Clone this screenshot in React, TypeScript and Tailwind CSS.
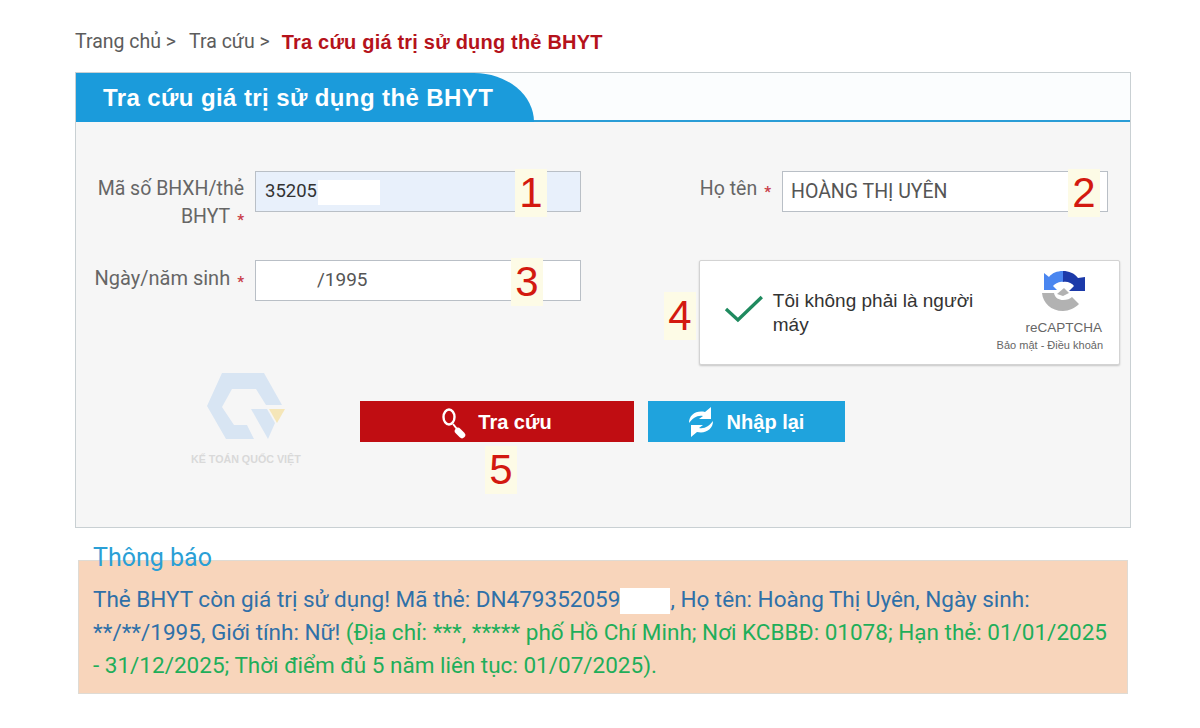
import type { ReactNode } from "react";

function StepNumber({ children, className }: { children: ReactNode; className: string }) {
	return (
		<span
			className={`absolute flex h-[48px] w-[32px] items-center justify-center bg-[#fdfbe6] font-['Liberation_Sans',sans-serif] text-[42px] font-normal leading-none text-[#d3190f] ${className}`}
		>
			{children}
		</span>
	);
}

function Required() {
	return <span className="ml-[7px] align-[-2px] text-[15px] font-bold text-[#c9404a]">*</span>;
}

function RecaptchaLogo() {
	return (
		<svg viewBox="0 0 44 40" className="h-[40px] w-[44px]">
			<path d="M21 0C15 0 10 2 7 6L2 2V19H15L11 15C13 13 17 10 21 11Z" fill="#4a86f0" />
			<path d="M21 0C27 0 32 2 36 7L43 6V20H27L32 15C30 12 25 10 21 11Z" fill="#1c3aa9" />
			<path d="M0 22H12C13 27 17 29 21 29C25 29 28 28 30 26L37 33C33 37 27 40 21 40C9 40 1 32 0 22Z" fill="#b2b2b2" />
			<path d="M15 23L22 17L27 22L21 25Z" fill="#b2b2b2" />
		</svg>
	);
}

function SearchIcon() {
	return (
		<svg viewBox="0 0 26 34" className="h-[34px] w-[26px]">
			<ellipse cx="7" cy="12" rx="5.5" ry="7.5" fill="none" stroke="#fff" strokeWidth="2.4" />
			<path d="M11 19l4 5" stroke="#fff" strokeWidth="2" />
			<path d="M16 26l4 4" stroke="#fff" strokeWidth="6.5" strokeLinecap="round" />
		</svg>
	);
}

function SyncIcon() {
	const arrow = "M3 17C3 9 10 4 19 6L25 1V13H13L17 10C11 9 7 12 3 17Z";
	return (
		<svg viewBox="0 0 30 32" className="h-[32px] w-[30px]" fill="#fff">
			<path d={arrow} />
			<path d={arrow} transform="rotate(180 15 16)" />
		</svg>
	);
}

function Logo() {
	return (
		<svg viewBox="12 6 80 68" className="h-[68px] w-[80px]">
			<path d="M28 7L70 7L88 39L72 39L62 23L38 23L28 41L40 59L53 59L60 73L32 73L13 40Z" fill="#d8e5f3" />
			<path d="M57 43L73 43L81 57L74 73Z" fill="#d8e5f3" />
			<path d="M75 43L91 43L83 57Z" fill="#f5e6b8" />
		</svg>
	);
}

export default function App() {
	return (
		<div className="min-h-[728px] bg-white pl-[75px] pr-[69px] font-['Roboto',sans-serif]">
			<div className="flex h-[72px] items-center pt-[12px] text-[19.5px] text-[#5c5c5c]">
				<span>Trang chủ &gt;</span>
				<span className="ml-[13px]">Tra cứu &gt;</span>
				<span className="ml-[12px] font-['Liberation_Sans',sans-serif] text-[20px] font-bold tracking-[0.2px] text-[#b5121b]">
					Tra cứu giá trị sử dụng thẻ BHYT
				</span>
			</div>

			<div className="relative h-[456px] border border-[#c9d0d3] bg-[#f6f6f6]">
				<div className="h-[49px] border-b-2 border-[#2a9dd6] bg-[#fbfdfe]">
					<div className="flex h-[49px] w-[458px] items-center rounded-tr-[60px_49px] bg-[#1b9bdb] pl-[27px] font-['Liberation_Sans',sans-serif] text-[24px] font-bold tracking-[0.4px] text-white">
						Tra cứu giá trị sử dụng thẻ BHYT
					</div>
				</div>

				<div className="flex pt-[49px]">
					<div className="flex w-[623px] flex-col">
						<div className="flex h-[89px] items-start gap-[9px]">
							<label className="w-[170px] pr-[2px] pt-[4px] text-right text-[19.5px] leading-[28px] text-[#666]">
								Mã số BHXH/thẻ BHYT
								<Required />
							</label>
							<div className="relative flex h-[41px] w-[326px] items-center border border-[#b9bfc6] bg-[#e8f0fb] pl-[9px] text-[18.5px] text-[#333]">
								35205
								<span className="absolute left-[62px] top-[8px] h-[25px] w-[62px] bg-white" />
								<StepNumber className="left-[259px] top-[-3px]">1</StepNumber>
							</div>
						</div>
						<div className="flex h-[89px] items-start gap-[9px]">
							<label className="w-[170px] pr-[2px] pt-[4px] text-right text-[20px] leading-[28px] text-[#666]">
								Ngày/năm sinh
								<Required />
							</label>
							<div className="relative flex h-[41px] w-[326px] items-center border border-[#b9bfc6] bg-white pl-[61px] text-[19px] text-[#555]">
								/1995
								<StepNumber className="left-[255px] top-[-3px]">3</StepNumber>
							</div>
						</div>
					</div>

					<div className="flex w-[421px] flex-col">
						<div className="flex h-[89px] items-start gap-[11px]">
							<label className="w-[72px] whitespace-nowrap pt-[4px] text-right text-[19.5px] leading-[28px] text-[#666]">
								Họ tên
								<Required />
							</label>
							<div className="relative flex h-[41px] w-[326px] items-center border border-[#b9bfc6] bg-white pl-[8px] text-[19.5px] text-[#555]">
								HOÀNG THỊ UYÊN
								<StepNumber className="left-[285px] top-[-3px]">2</StepNumber>
							</div>
						</div>
						<div className="relative flex h-[105px] w-[421px] rounded-[2px] border border-[#d3d3d3] bg-white shadow-[0_1px_2px_rgba(0,0,0,0.2)]">
							<StepNumber className="left-[-36px] top-[31px]">4</StepNumber>
							<svg viewBox="0 0 40 30" className="ml-[24px] mt-[33px] h-[30px] w-[40px]">
								<path d="M2 15l12 11L38 3" fill="none" stroke="#1f8a5f" strokeWidth="3.4" />
							</svg>
							<p className="ml-[9px] mt-[28px] w-[225px] font-['Liberation_Sans',sans-serif] text-[19px] leading-[24px] text-[#333]">
								Tôi không phải là người máy
							</p>
							<div className="ml-auto flex flex-col items-end pr-[16px] pt-[10px] font-['Liberation_Sans',sans-serif] text-[#666]">
								<span className="mr-[17px]">
									<RecaptchaLogo />
								</span>
								<span className="mr-[1px] mt-[9px] text-[13.5px] leading-[16px]">reCAPTCHA</span>
								<span className="mt-[2px] whitespace-nowrap text-[11px] leading-[14px]">Bảo mật - Điều khoản</span>
							</div>
						</div>
					</div>
				</div>

				<div className="absolute left-[115px] top-[299px] flex flex-col items-center">
					<Logo />
					<span className="mt-[11px] whitespace-nowrap font-['Liberation_Sans',sans-serif] text-[10.7px] font-bold text-[#d9d9d9]">
						KẾ TOÁN QUỐC VIỆT
					</span>
				</div>

				<div className="absolute left-[284px] top-[328px] flex gap-[14px] font-['Liberation_Sans',sans-serif] text-[20px] font-bold text-white">
					<div className="relative flex h-[41px] w-[274px] items-center justify-center gap-[10px] bg-[#c00d12]">
						<SearchIcon />
						Tra cứu
						<StepNumber className="left-[125px] top-[45px]">5</StepNumber>
					</div>
					<div className="flex h-[41px] w-[197px] items-center justify-center gap-[11px] bg-[#1fa3dd] pr-[3px]">
						<SyncIcon />
						Nhập lại
					</div>
				</div>
			</div>

			<div className="ml-[3px] mt-[16px] w-[1050px]">
				<div className="relative z-10 ml-[15px] h-[28px] w-fit text-[25px] leading-[28px] text-[#2a9fd6]">
					Thông báo
				</div>
				<div className="-mt-[12px] h-[134px] border border-[#dfdbd4] bg-[#f8d5bb] pl-[14px] pr-[16px] pt-[22px] text-[22.5px] leading-[33px] text-[#2f70a8]">
					Thẻ BHYT còn giá trị sử dụng! Mã thẻ: DN479352059
					<span className="inline-block h-[26px] w-[50px] bg-white align-middle" />
					, Họ tên: Hoàng Thị Uyên, Ngày sinh: **/**/1995, Giới tính: Nữ!{" "}
					<span className="text-[#1fae5a]">
						(Địa chỉ: ***, ***** phố Hồ Chí Minh; Nơi KCBBĐ: 01078; Hạn thẻ: 01/01/2025 - 31/12/2025; Thời điểm đủ 5 năm liên tục: 01/07/2025).
					</span>
				</div>
			</div>
		</div>
	);
}
